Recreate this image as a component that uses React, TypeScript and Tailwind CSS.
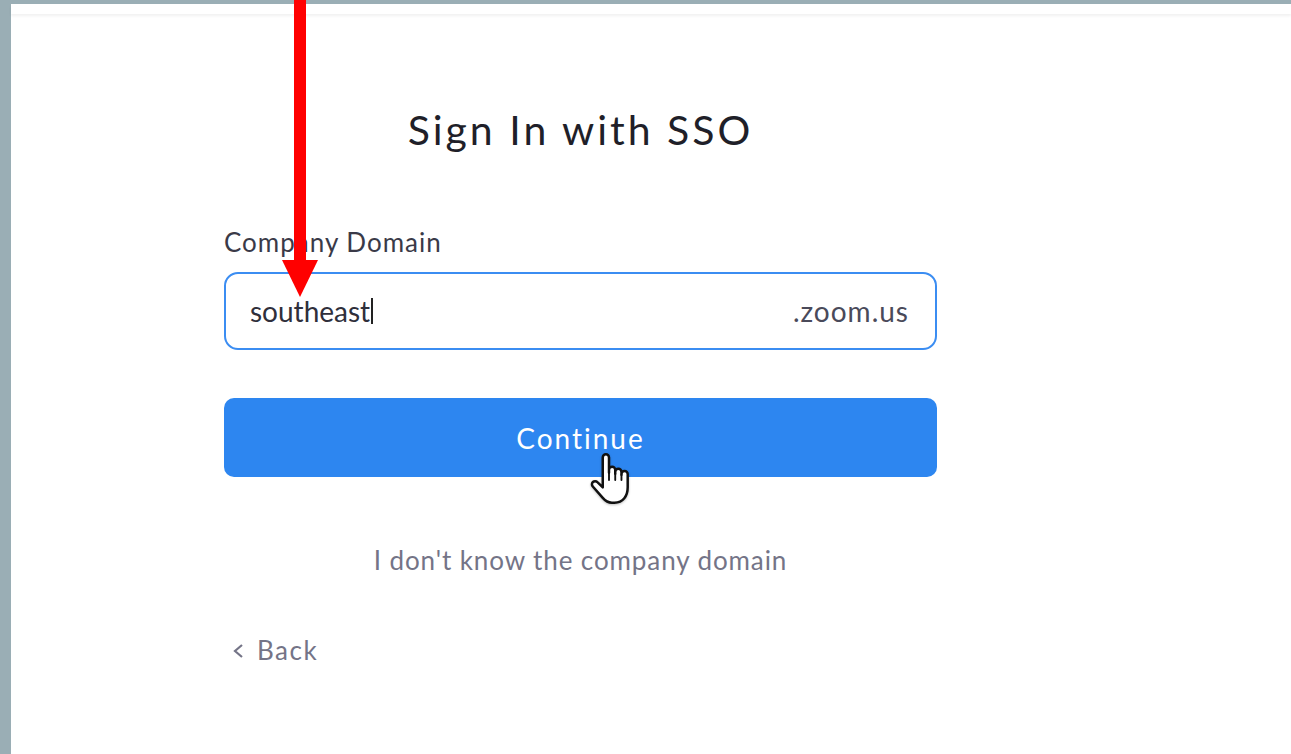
import React from "react";

const font = { fontFamily: "Lato, 'Open Sans', sans-serif" };

function HandCursor() {
  return (
    <svg width="42" height="54" viewBox="0 0 20 26" className="drop-shadow-[0_1px_1px_rgba(0,0,0,0.25)]">
      <path
        d="M7 13 V2.6 a1.5 1.5 0 0 1 3 0 V10 V8.6 a1.5 1.5 0 0 1 3 0 V10.5 V9.6 a1.5 1.5 0 0 1 3 0 V11 V10.6 a1.5 1.5 0 0 1 3 0 V17 c0 4.2 -2.2 7.4 -6.4 7.4 H11.4 c-2 0 -3.2 -0.9 -4.4 -2.3 L2.2 16.6 a1.5 1.5 0 0 1 2.2 -2.1 L7 17 Z"
        fill="#fff"
        stroke="#111"
        strokeWidth="1.2"
        strokeLinejoin="round"
      />
      <path d="M10 10 V13.5 M13 10.5 V13.5 M16 11 V13.5" stroke="#111" strokeWidth="0.9" strokeLinecap="round" />
    </svg>
  );
}

function RedArrow() {
  return (
    <svg width="40" height="298" viewBox="0 0 40 298" className="absolute left-[280px] top-0">
      <rect x="14" y="0" width="12" height="262" fill="#ff0000" />
      <polygon points="2,260 38,260 20,297" fill="#ff0000" />
    </svg>
  );
}

export default function App() {
  return (
    <div className="relative min-h-screen bg-[#9aaeb5] pl-[11px] pt-[4px]" style={font}>
      <div className="h-[750px] bg-white">
        <div className="h-[10px] shadow-[0_2px_3px_rgba(0,0,0,0.06)]" />
        <div className="ml-[213px] w-[713px]">
          <h1 className="mt-[94px] text-center text-[41px] leading-[44px] tracking-[3px] text-[#1f1f29]">
            Sign In with SSO
          </h1>

          <label className="mt-[76px] block text-[26px] leading-[28px] tracking-[1px] text-[#3a3a48]">
            Company Domain
          </label>
          <div className="mt-[16px] flex h-[78px] items-center rounded-[14px] border-2 border-[#3b8df2] pl-[24px] pr-[26px]">
            <span className="text-[28px] text-[#2f2f3b]">southeast</span>
            <span className="ml-[1px] h-[26px] w-[2px] bg-[#222]" />
            <span className="ml-auto text-[28px] tracking-[1px] text-[#4a4a5a]">.zoom.us</span>
          </div>

          <button className="relative mt-[48px] flex h-[79px] w-full items-center justify-center rounded-[10px] bg-[#2d86f0] text-[28px] tracking-[2px] text-white">
            Continue
            <span className="absolute left-[364px] top-[54px]">
              <HandCursor />
            </span>
          </button>

          <p className="mt-[64px] text-center text-[26px] tracking-[0.9px] text-[#747487]">
            I don't know the company domain
          </p>

          <div className="mt-[51px] flex items-center gap-[12px] pl-[7px] text-[26px] tracking-[1.5px] text-[#747487]">
            <svg width="14" height="20" viewBox="0 0 14 20">
              <path d="M11 4 L4 10 L11 16" fill="none" stroke="#747487" strokeWidth="2.2" />
            </svg>
            <span>Back</span>
          </div>
        </div>
      </div>
      <RedArrow />
    </div>
  );
}
